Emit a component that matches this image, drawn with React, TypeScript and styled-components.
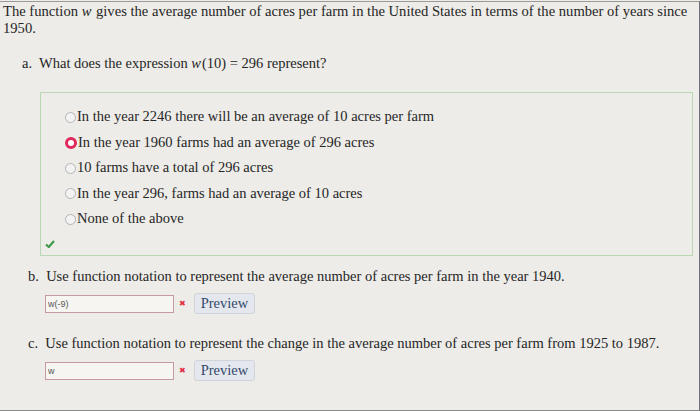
import styled, { createGlobalStyle } from 'styled-components'

const GlobalStyle = createGlobalStyle`
  html, body {
    margin: 0;
    padding: 0;
    background: #edece8;
  }
  body {
    width: 700px;
    height: 411px;
    overflow: hidden;
    font-family: 'Liberation Serif', 'Times New Roman', serif;
    color: #262626;
  }
`

const options = [
  'In the year 2246 there will be an average of 10 acres per farm',
  'In the year 1960 farms had an average of 296 acres',
  '10 farms have a total of 296 acres',
  'In the year 296, farms had an average of 10 acres',
  'None of the above',
]

export default function App() {
  return (
    <>
      <GlobalStyle />
      <Page>
        <Intro>
          The function <MathVar>w</MathVar> gives the average number of acres per farm in the United States in terms of the number of years since 1950.
        </Intro>
        <Question $top={17}>
          a.&nbsp; What does the expression <MathVar>w</MathVar>(10) = 296 represent?
        </Question>
        <AnswerBox>
          <OptionList>
            {options.map((opt, i) => (
              <Option key={opt}>
                <Radio $checked={i === 1} />
                {opt}
              </Option>
            ))}
          </OptionList>
          <Check viewBox="0 0 10 8">
            <path d="M1 4.5 L3.8 7 L9 1" fill="none" stroke="#3f9a4a" strokeWidth="2.2" />
          </Check>
        </AnswerBox>
        <Part>
          <Question $top={11}>
            b.&nbsp; Use function notation to represent the average number of acres per farm in the year 1940.
          </Question>
          <AnswerRow>
            <Field>w(-9)</Field>
            <Wrong>✖</Wrong>
            <Preview>Preview</Preview>
          </AnswerRow>
        </Part>
        <Part>
          <Question $top={20}>
            c.&nbsp; Use function notation to represent the change in the average number of acres per farm from 1925 to 1987.
          </Question>
          <AnswerRow>
            <Field>w</Field>
            <Wrong>✖</Wrong>
            <Preview>Preview</Preview>
          </AnswerRow>
        </Part>
      </Page>
    </>
  )
}

const Page = styled.div`
  height: 410px;
  box-sizing: border-box;
  border-top: 1px solid #9a9a98;
  border-right: 1px solid #6f6f78;
  border-bottom: 1px solid #8a8a8a;
  margin-top: 1px;
  padding: 1px 0 0 3px;
  display: flex;
  flex-direction: column;
`

const Intro = styled.p`
  margin: 0;
  font-size: 14.6px;
  line-height: 17px;
  padding-right: 4px;
`

const MathVar = styled.i`
  font-family: 'Liberation Serif', serif;
  font-style: italic;
  padding-right: 1px;
`

const Question = styled.p<{ $top: number }>`
  margin: ${p => p.$top}px 0 0;
  font-size: 14.5px;
  line-height: 18px;
  padding-left: 19px;
`

const AnswerBox = styled.div`
  margin: 20px 6px 0 37px;
  border: 1px solid #b9d8b3;
  height: 164px;
  box-sizing: border-box;
  display: flex;
  flex-direction: column;
  justify-content: space-between;
  padding: 14px 0 7px 4px;
`

const OptionList = styled.ul`
  list-style: none;
  margin: 0;
  padding: 0 0 0 20px;
  display: flex;
  flex-direction: column;
  gap: 7.5px;
`

const Option = styled.li`
  display: flex;
  align-items: center;
  font-size: 14.5px;
  line-height: 18px;
`

const Radio = styled.span<{ $checked: boolean }>`
  width: ${p => (p.$checked ? '6px' : '9px')};
  height: ${p => (p.$checked ? '6px' : '9px')};
  border-radius: 50%;
  margin-right: 1px;
  margin-top: 2px;
  flex-shrink: 0;
  background: ${p => (p.$checked ? '#fff' : '#f3f3f3')};
  border: ${p => (p.$checked ? '3px solid #e0285c' : '1px solid #b4b4b4')};
`

const Check = styled.svg`
  width: 10px;
  height: 8px;
`

const Part = styled.div`
  display: flex;
  flex-direction: column;
  padding-left: 6px;
`

const AnswerRow = styled.div`
  display: flex;
  align-items: center;
  margin: 8px 0 0 36px;
`

const Field = styled.div`
  width: 129px;
  height: 18px;
  box-sizing: border-box;
  border: 1px solid #c69aa2;
  background: #f6f5f2;
  font-family: 'Liberation Sans', Arial, sans-serif;
  font-size: 9px;
  line-height: 16px;
  padding-left: 2px;
  color: #555;
`

const Wrong = styled.span`
  color: #e0303f;
  font-size: 8px;
  margin: 0 8px 0 5px;
  font-family: 'DejaVu Sans', sans-serif;
`

const Preview = styled.button`
  font-family: 'Liberation Serif', serif;
  font-size: 14.5px;
  color: #34496b;
  background: #e4e8ee;
  border: 1px solid #d0d4da;
  border-radius: 3px;
  padding: 1px 6px 2px;
  height: 21px;
`
